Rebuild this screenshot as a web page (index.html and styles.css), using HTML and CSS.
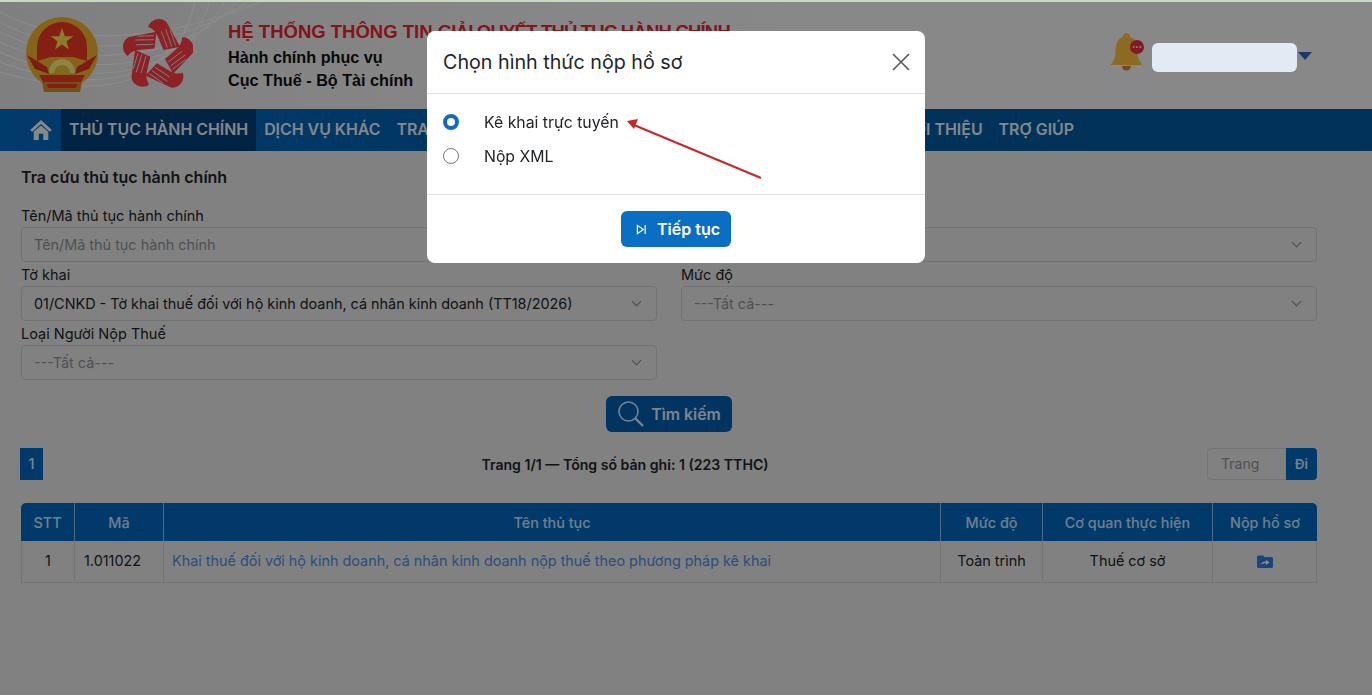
FILE: index.html
```html
<!DOCTYPE html>
<html lang="vi">
<head>
  <meta charset="UTF-8">
  <title>Hệ thống thông tin giải quyết thủ tục hành chính</title>
  <link rel="stylesheet" href="styles.css">
</head>
<body>

<div class="top-line"></div>

<header class="top-header">
  <svg class="header-waves" viewBox="0 0 280 100" fill="none" stroke="#fff" stroke-width="1">
    <path d="M0 12 C70 50 170 40 265 0"/>
    <path d="M0 22 C70 62 180 50 250 0"/>
    <path d="M0 32 C80 72 190 60 238 0"/>
    <path d="M0 42 C90 84 195 66 225 0"/>
    <path d="M0 52 C90 92 190 76 210 0"/>
    <path d="M0 62 C90 96 180 84 195 0"/>
    <path d="M0 72 C90 98 160 90 176 30"/>
  </svg>

  <svg class="emblem" viewBox="0 0 74 76">
    <circle cx="37" cy="36" r="36" fill="#f2b72e"/>
    <path d="M12 44 V30 A25 25 0 0 1 62 30 V44 L48 40 H26 Z" fill="#f03a26"/>
    <polygon points="37,11 39.800,19.200 48.400,19.200 41.500,24.300 44,32.500 37,27.600 30,32.500 32.500,24.300 25.600,19.200 34.200,19.200" fill="#ffe14a"/>
    <path d="M24 56 a13 14 0 0 1 26 0 Z" fill="#fff07a"/>
    <path d="M29 56 a8 8 0 0 1 16 0 Z" fill="#e8c23a"/>
    <path d="M2 38 L22 50 L24 57 L10 52 Z M72 38 L52 50 L50 57 L64 52 Z" fill="#e8322a"/>
    <path d="M14 58 L60 58 L56 65 L18 65 Z" fill="#f03a26"/>
    <path d="M17 65 H57 L55 75 H19 Z" fill="#d6902a"/>
    <path d="M22 67 H52 L51 71 H23 Z" fill="#f03a26"/>
  </svg>

  <svg class="star-logo" viewBox="-35 -37.500 70 76">
    <defs>
      <g id="hand">
        <path d="M-9 -26 C-7 -33 3 -36 8 -30 L20 -8 L5 -5 L-1 -19 C-3 -23 -6 -25 -9 -26 Z" fill="#ff3c46"/>
        <path d="M8.500 -7 L3 -22 M12.500 -8 L7 -24 M16 -9 L11 -23" stroke="#e8e8e8" stroke-width="0.800" fill="none"/>
      </g>
    </defs>
    <g transform="scale(1.100)">
      <use href="#hand"/>
      <use href="#hand" transform="rotate(72)"/>
      <use href="#hand" transform="rotate(144)"/>
      <use href="#hand" transform="rotate(216)"/>
      <use href="#hand" transform="rotate(288)"/>
    </g>
  </svg>

  <div class="brand">
    <div class="brand-title">HỆ THỐNG THÔNG TIN <span class="brand-rest">GIẢI QUYẾT THỦ TỤC HÀNH CHÍNH</span></div>
    <div class="brand-line">Hành chính phục vụ</div>
    <div class="brand-line">Cục Thuế - Bộ Tài chính</div>
  </div>

  <div class="user-box">
    <span class="bell">
      <svg viewBox="0 0 32 40" width="33" height="40">
        <path d="M16 1 a3.500 3.500 0 0 1 3.500 4 C26 7 27 14 27 21 C27 27 30 30 32 33 L0 33 C2 30 5 27 5 21 C5 14 6 7 12.500 5 A3.500 3.500 0 0 1 16 1 Z" fill="#ffc23c"/>
        <path d="M11.500 34 h9 a4.500 4.500 0 0 1 -9 0 Z" fill="#d8842a"/>
      </svg>
      <span class="bell-badge">•••</span>
    </span>
    <div class="user-name"></div>
    <span class="user-caret"></span>
  </div>
</header>

<nav class="main-nav">
  <a class="nav-home">
    <svg viewBox="0 0 24 22" width="22" height="20">
      <path d="M12 0 L24 11 L21.500 13 L12 4.500 L2.500 13 L0 11 Z" fill="#f4f8fc"/>
      <path d="M4 13 L12 6 L20 13 V22 H14.500 V15 H9.500 V22 H4 Z" fill="#f4f8fc"/>
    </svg>
  </a>
  <a class="nav-item active">THỦ TỤC HÀNH CHÍNH</a>
  <a class="nav-item">DỊCH VỤ KHÁC</a>
  <a class="nav-item">TRA CỨU</a>
  <a class="nav-item nav-push">GIỚI THIỆU</a>
  <a class="nav-item">TRỢ GIÚP</a>
</nav>

<main class="content">
  <h3 class="page-title">Tra cứu thủ tục hành chính</h3>

  <div class="search-grid">
    <div class="field">
      <label>Tên/Mã thủ tục hành chính</label>
      <div class="fake-input muted">Tên/Mã thủ tục hành chính</div>
    </div>
    <div class="field">
      <label>&nbsp;</label>
      <div class="fake-input muted select"></div>
    </div>
    <div class="field">
      <label>Tờ khai</label>
      <div class="fake-input select">01/CNKD - Tờ khai thuế đối với hộ kinh doanh, cá nhân kinh doanh (TT18/2026)</div>
    </div>
    <div class="field">
      <label>Mức độ</label>
      <div class="fake-input muted select">---Tất cả---</div>
    </div>
    <div class="field">
      <label>Loại Người Nộp Thuế</label>
      <div class="fake-input muted select">---Tất cả---</div>
    </div>
  </div>

  <div class="search-row">
    <button class="search-btn">
      <svg viewBox="0 0 26 26" width="26" height="26" fill="none" stroke="#d9ecff" stroke-width="1.600">
        <circle cx="10.500" cy="10.500" r="9.500"/>
        <path d="M17.500 17.500 L25 25" stroke-width="2.400"/>
      </svg>
      Tìm kiếm
    </button>
  </div>

  <div class="pager-row">
    <a class="page-num">1</a>
    <div class="pager-info">Trang 1/1 — Tổng số bản ghi: 1 (223 TTHC)</div>
    <div class="page-go">
      <span class="page-input">Trang</span>
      <a class="go-btn">Đi</a>
    </div>
  </div>

  <table class="result-table">
    <thead>
      <tr>
        <th class="col-stt">STT</th>
        <th class="col-ma">Mã</th>
        <th>Tên thủ tục</th>
        <th class="col-level">Mức độ</th>
        <th class="col-org">Cơ quan thực hiện</th>
        <th class="col-submit">Nộp hồ sơ</th>
      </tr>
    </thead>
    <tbody>
      <tr>
        <td class="center">1</td>
        <td>1.011022</td>
        <td class="proc-cell"><a class="proc-link">Khai thuế đối với hộ kinh doanh, cá nhân kinh doanh nộp thuế theo phương pháp kê khai</a></td>
        <td class="center">Toàn trình</td>
        <td class="center">Thuế cơ sở</td>
        <td class="center">
          <svg class="folder-icon" viewBox="0 0 16 13" width="16" height="13">
            <path d="M0 2 a1.500 1.500 0 0 1 1.500 -1.500 H6 L7.500 2 H14.500 A1.500 1.500 0 0 1 16 3.500 V11.500 A1.500 1.500 0 0 1 14.500 13 H1.500 A1.500 1.500 0 0 1 0 11.500 Z" fill="#2a80e8"/>
            <path d="M3.500 10 C4 7.500 6 6.500 9 6.500 V4.800 L12.500 7.500 L9 10 V8.300 C7 8.300 5 8.600 3.500 10 Z" fill="#fff"/>
          </svg>
        </td>
      </tr>
    </tbody>
  </table>
</main>

<div class="backdrop"></div>

<div class="modal">
  <div class="modal-head">
    <h5>Chọn hình thức nộp hồ sơ</h5>
    <svg class="modal-close" viewBox="0 0 18 18" width="18" height="18" stroke="#5a5a5a" stroke-width="1.700">
      <path d="M1 1 L17 17 M17 1 L1 17"/>
    </svg>
  </div>
  <div class="modal-body">
    <label class="radio-row"><span class="radio checked"></span>Kê khai trực tuyến</label>
    <label class="radio-row"><span class="radio"></span>Nộp XML</label>
    <svg class="arrow" viewBox="0 0 140 64" width="140" height="64">
      <path d="M135 61 L8 8" stroke="#c9252b" stroke-width="2"/>
      <polygon points="1,4 12,2 8,12" fill="#c9252b"/>
    </svg>
  </div>
  <div class="modal-foot">
    <button class="next-btn">
      <svg viewBox="0 0 12 12" width="11" height="11" fill="none" stroke="#fff" stroke-width="1.300">
        <path d="M1.500 1.500 L8 6 L1.500 10.500 Z M10 1 V11"/>
      </svg>
      Tiếp tục
    </button>
  </div>
</div>

</body>
</html>
```

FILE: styles.css
```css
* {
  box-sizing: border-box;
}
html, body {
  height: 100%;
}
body {
  margin: 0;
  font-family: Inter, "Noto Sans", sans-serif;
  font-size: 14.400px;
  color: #212529;
  background: #ebebeb;
  overflow: hidden;
}
a {
  text-decoration: none;
}
.top-line {
  position: fixed;
  left: 0;
  top: 0;
  width: 100%;
  height: 2px;
  background: #c8d9be;
  z-index: 2;
}

/* header */
.top-header {
  position: relative;
  display: flex;
  align-items: flex-start;
  height: 109px;
  padding: 17px 0 0 25px;
  background: linear-gradient(90deg, #e8e8e8, #f6f6f6 40%, #f8f8f8);
  overflow: hidden;
}
.header-waves {
  position: absolute;
  left: 0;
  top: 0;
  width: 280px;
  height: 100px;
}
.emblem {
  position: relative;
  width: 74px;
  height: 76px;
  flex: none;
}
.star-logo {
  position: relative;
  width: 70px;
  height: 76px;
  margin: 1px 0 0 24px;
  flex: none;
}
.brand {
  position: relative;
  margin: 3px 0 0 35px;
  font-family: "Liberation Sans", Arial, sans-serif;
}
.brand-title {
  margin-bottom: 2px;
  color: #f0252e;
  font-size: 18.500px;
  line-height: 24px;
  font-weight: 700;
  white-space: nowrap;
}
.brand-rest {
  letter-spacing: -0.8px;
}
.brand-line {
  font-size: 16.200px;
  font-weight: 700;
  line-height: 23px;
  color: #111;
}
.user-box {
  display: flex;
  align-items: flex-start;
  margin: 15px 60px 0 auto;
}
.bell {
  position: relative;
  width: 33px;
  height: 40px;
  margin-right: 9px;
}
.bell-badge {
  position: absolute;
  right: -1px;
  top: 8px;
  width: 14px;
  height: 14px;
  border-radius: 50%;
  background: #f0303a;
  color: #fff;
  font-size: 6px;
  line-height: 14px;
  text-align: center;
}
/* name is blanked out in the shot, sits over the dimmed layer */
.user-name {
  position: relative;
  z-index: 2;
  width: 145px;
  height: 29px;
  margin-top: 11px;
  background: #e2eaf4;
  border-radius: 6px;
}
.user-caret {
  width: 0;
  height: 0;
  margin: 20px 0 0 1px;
  border-left: 7px solid transparent;
  border-right: 7px solid transparent;
  border-top: 8px solid #2a68c4;
}

/* menu */
.main-nav {
  display: flex;
  align-items: stretch;
  height: 42px;
  padding-left: 30px;
  background: linear-gradient(90deg, #036cc4, #005ba4 60%);
}
.nav-home {
  display: flex;
  align-items: center;
  width: 31px;
}
.nav-item {
  display: flex;
  align-items: center;
  padding: 0 8px 2px;
  color: #f0f6fc;
  font-size: 15.900px;
  font-weight: 600;
  white-space: nowrap;
}
.nav-item.active {
  background: #03417d;
}
.nav-push {
  margin-left: auto;
}
.main-nav .nav-item:last-child {
  margin-right: 290px;
}

/* search form */
.content {
  padding: 16px 55px 0 21px;
}
.page-title {
  margin: 0 0 19px;
  font-size: 16px;
  line-height: 21px;
  font-weight: 600;
}
.search-grid {
  display: grid;
  grid-template-columns: 1fr 1fr;
  column-gap: 24px;
  row-gap: 4px;
}
.field label {
  display: block;
  font-size: 14.500px;
  line-height: 17px;
  margin-bottom: 3px;
}
.fake-input {
  position: relative;
  height: 35px;
  padding: 0 12px;
  border: 1px solid #d0d0d0;
  border-radius: 4px;
  font-size: 14.400px;
  line-height: 33px;
  white-space: nowrap;
  overflow: hidden;
}
.fake-input.muted {
  color: #8f9499;
}
.fake-input.select::after {
  content: "";
  position: absolute;
  right: 16px;
  top: 11px;
  width: 6px;
  height: 6px;
  border-right: 1.500px solid #8a8a8a;
  border-bottom: 1.500px solid #8a8a8a;
  transform: rotate(45deg);
}
.search-row {
  display: flex;
  justify-content: center;
  margin-top: 16px;
}
.search-btn {
  display: flex;
  align-items: center;
  gap: 7px;
  height: 36px;
  padding: 0 11px 0 12px;
  border: none;
  border-radius: 6px;
  background: #0360b0;
  color: #e4f0fc;
  font: 600 15.800px Inter, sans-serif;
}

/* pager */
.pager-row {
  position: relative;
  display: flex;
  align-items: center;
  justify-content: center;
  height: 32px;
  margin-top: 16px;
  padding-right: 88px;
}
.page-num {
  position: absolute;
  left: -1px;
  top: 0;
  width: 23px;
  height: 32px;
  background: #036ac2;
  color: #dcebfb;
  font-weight: 500;
  line-height: 32px;
  text-align: center;
}
.pager-info {
  font-size: 14.100px;
  font-weight: 600;
}
.page-go {
  position: absolute;
  right: 0;
  top: 0;
  display: flex;
}
.page-input {
  width: 79px;
  height: 32px;
  padding-left: 13px;
  border: 1px solid #d4d4d4;
  border-right: none;
  border-radius: 4px 0 0 4px;
  color: #8f9499;
  font-size: 14px;
  line-height: 30px;
}
.go-btn {
  width: 31px;
  height: 32px;
  border-radius: 0 4px 4px 0;
  background: #036ac2;
  color: #dcebfb;
  font-size: 13px;
  font-weight: 600;
  line-height: 32px;
  text-align: center;
}

/* table */
.result-table {
  width: 100%;
  margin-top: 23px;
  border-collapse: separate;
  border-spacing: 0;
  table-layout: fixed;
}
.result-table th {
  height: 38px;
  background: #036ac2;
  color: #cfe5fb;
  font-weight: 500;
  border-right: 1px solid #8cc0ee;
  text-align: center;
}
.result-table th:first-child {
  border-top-left-radius: 5px;
}
.result-table th:last-child {
  border-top-right-radius: 5px;
  border-right: none;
}
.result-table td {
  height: 42px;
  padding: 0 9px 2px;
  border-right: 1px solid #d4d4d4;
  border-bottom: 1px solid #d4d4d4;
}
.result-table td:first-child {
  border-left: 1px solid #d4d4d4;
}
.result-table td.proc-cell {
  padding-left: 8px;
}
.col-stt { width: 54px; }
.col-ma { width: 89px; }
.col-level { width: 102px; }
.col-org { width: 170px; }
.col-submit { width: 104px; }
.center {
  text-align: center;
}
.proc-link {
  color: #4f8fe8;
}
.folder-icon {
  display: block;
  margin: 2px auto 0;
}

/* modal */
.backdrop {
  position: fixed;
  inset: 0;
  z-index: 1;
  background: rgba(0, 0, 0, 0.45);
}
.modal {
  position: fixed;
  left: 427px;
  top: 31px;
  z-index: 3;
  width: 498px;
  height: 232px;
  display: flex;
  flex-direction: column;
  background: #fff;
  border-radius: 8px;
}
.modal-head {
  display: flex;
  align-items: center;
  justify-content: space-between;
  height: 63px;
  padding: 0 15px 0 16px;
  border-bottom: 1px solid #dee2e6;
}
.modal-head h5 {
  margin: 0;
  font-size: 19.700px;
  font-weight: 400;
  line-height: 24px;
}
.modal-body {
  position: relative;
  height: 101px;
  padding: 11px 16px 0;
  border-bottom: 1px solid #dee2e6;
}
.radio-row {
  display: flex;
  align-items: center;
  height: 34px;
  font-size: 15.800px;
}
.radio {
  width: 16px;
  height: 16px;
  margin-right: 25px;
  border: 1px solid #777;
  border-radius: 50%;
  background: #fff;
}
.radio.checked {
  border: 4.500px solid #1668c4;
}
.arrow {
  position: absolute;
  left: 199px;
  top: 23px;
}
.modal-foot {
  display: flex;
  justify-content: center;
  padding-top: 16px;
}
.next-btn {
  display: flex;
  align-items: center;
  gap: 10px;
  height: 36px;
  padding: 0 11px 0 15px;
  border: none;
  border-radius: 6px;
  background: #0a6fc2;
  color: #fff;
  font: 600 16px Inter, sans-serif;
}
```
